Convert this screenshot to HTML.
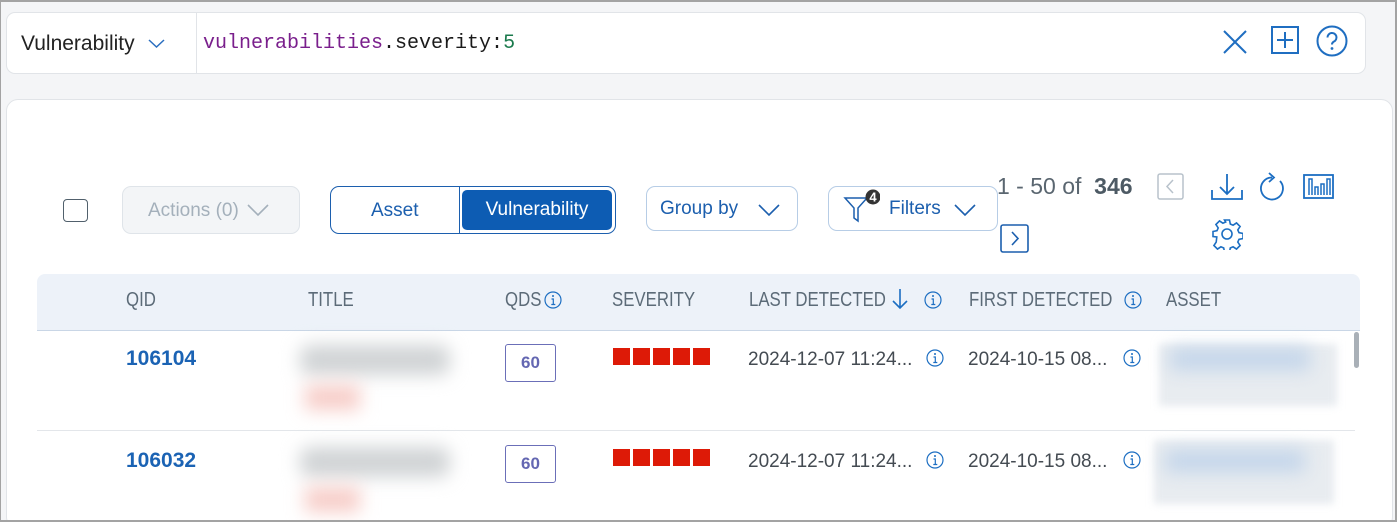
<!DOCTYPE html>
<html><head><meta charset="utf-8"><style>
*{box-sizing:border-box;margin:0;padding:0}
html,body{width:1397px;height:522px;overflow:hidden}
body{background:#f4f5f7;position:relative;font-family:"Liberation Sans",sans-serif}
.a{position:absolute}
.frame{left:0;top:0;width:1397px;height:522px;border:2px solid #a3a3a3;border-left-width:1px;z-index:50;pointer-events:none}
.search{left:6px;top:12px;width:1360px;height:62px;background:#fff;border:1px solid #e1e4e8;border-radius:9px}
.panel{left:6px;top:99px;width:1387px;height:430px;background:#fff;border:1px solid #e1e4e8;border-radius:12px}
.hdr{left:37px;top:274px;width:1323px;height:57px;background:#edf2f9;border-bottom:1px solid #c9d6e6;border-radius:8px 8px 0 0}
.hcell{top:289px;font-size:20px;color:#5c6b78;transform:scaleX(.84);transform-origin:0 0;white-space:nowrap}
.btn{border:1px solid #b7cde6;border-radius:9px;background:#fff;color:#1c5fae;font-size:19px}
.qid{font-size:21px;font-weight:bold;color:#1b63b4}
.qds{width:51px;height:38px;border:1px solid #6b6fb8;border-radius:3px;color:#6467b2;font-weight:bold;font-size:17px;text-align:center;line-height:36px}
.sev{width:97px;height:17px;background:repeating-linear-gradient(90deg,#dd1a07 0 17px,#fff 17px 20px)}
.dt{font-size:19px;color:#444b52;white-space:nowrap}
.blur{filter:blur(9px)}
</style></head><body>
<div class="a frame"></div>
<div class="a search"></div>
<div class="a" style="left:196px;top:13px;width:1px;height:60px;background:#e1e4e8"></div>
<div class="a" style="left:21px;top:32px;font-size:21px;color:#222">Vulnerability</div>
<svg class="a" style="left:148px;top:38px" width="17" height="11"><path d="M1 2l7.5 7L16 2" fill="none" stroke="#2a6ec0" stroke-width="1.5"/></svg>
<div class="a" style="left:203px;top:32px;font-family:'Liberation Mono',monospace;font-size:20px;color:#1a1a1a"><span style="color:#7a1f8c">vulnerabilities</span>.severity:<span style="color:#1a7a4c">5</span></div>
<svg class="a" style="left:1222px;top:29px" width="26" height="26"><path d="M2 2l22 22M24 2L2 24" stroke="#1f6ec1" stroke-width="2" fill="none"/></svg>
<svg class="a" style="left:1271px;top:26px" width="28" height="28"><rect x="1" y="1" width="26" height="26" fill="none" stroke="#1f6ec1" stroke-width="2"/><path d="M14 6v16M6 14h16" stroke="#1f6ec1" stroke-width="2"/></svg>
<svg class="a" style="left:1316px;top:25px" width="32" height="32"><circle cx="16" cy="16" r="14.5" fill="none" stroke="#1f6ec1" stroke-width="2"/><path d="M11.5 12.5a4.5 4.5 0 1 1 6.5 4c-1.5.8-2 1.6-2 3" fill="none" stroke="#1f6ec1" stroke-width="2"/><circle cx="16" cy="23.5" r="1.4" fill="#1f6ec1"/></svg>

<div class="a panel"></div>
<div class="a" style="left:63px;top:199px;width:25px;height:23px;border:1.5px solid #51606c;border-radius:4px;background:#fff"></div>
<div class="a" style="left:122px;top:186px;width:178px;height:48px;border:1px solid #dfe4e9;border-radius:9px;background:#f3f5f7;color:#a4b0bb;font-size:19px;padding:13px 0 0 25px">Actions (0)</div>
<svg class="a" style="left:247px;top:203px" width="22" height="14"><path d="M1 2l10 10L21 2" fill="none" stroke="#a4b0bb" stroke-width="1.6"/></svg>
<div class="a" style="left:330px;top:186px;width:286px;height:48px;border:1px solid #1c5fae;border-radius:9px;background:#fff"></div>
<div class="a" style="left:459px;top:187px;width:1px;height:46px;background:#1c5fae"></div>
<div class="a" style="left:371px;top:200px;font-size:19px;color:#1c5fae">Asset</div>
<div class="a" style="left:462px;top:190px;width:150px;height:40px;background:#0d5cb3;border-radius:5px;color:#fff;font-size:19px;text-align:center;line-height:40px">Vulnerability</div>
<div class="a btn" style="left:646px;top:186px;width:152px;height:45px;padding:11px 0 0 13px">Group by</div>
<svg class="a" style="left:758px;top:203px" width="22" height="14"><path d="M1 2l10 10L21 2" fill="none" stroke="#1c5fae" stroke-width="1.6"/></svg>
<div class="a btn" style="left:828px;top:186px;width:170px;height:45px;padding:11px 0 0 60px">Filters</div>
<svg class="a" style="left:954px;top:203px" width="22" height="14"><path d="M1 2l10 10L21 2" fill="none" stroke="#1c5fae" stroke-width="1.6"/></svg>
<svg class="a" style="left:840px;top:186px" width="40" height="40"><path d="M5 12h22l-9 10v13l-4-3v-10z" fill="none" stroke="#1c5fae" stroke-width="1.5"/><circle cx="33" cy="11" r="7.5" fill="#333"/><text x="33" y="15.5" font-size="13" font-weight="bold" fill="#fff" text-anchor="middle" font-family="Liberation Sans">4</text></svg>
<div class="a" style="left:997px;top:173px;font-size:23px;color:#5a6670;white-space:nowrap">1 - 50 of &nbsp;<b style="color:#4d5a64">346</b></div>
<svg class="a" style="left:1157px;top:173px" width="28" height="28"><rect x="1" y="1" width="25" height="25" rx="2" fill="none" stroke="#b8c2cb" stroke-width="1.5"/><path d="M16 7l-6 6.5 6 6.5" fill="none" stroke="#b8c2cb" stroke-width="1.5"/></svg>
<svg class="a" style="left:1000px;top:224px" width="30" height="30"><rect x="1" y="1" width="27" height="27" rx="2" fill="none" stroke="#1c5fae" stroke-width="1.6"/><path d="M12 8l6 6.5-6 6.5" fill="none" stroke="#1c5fae" stroke-width="1.6"/></svg>
<svg class="a" style="left:1210px;top:172px" width="34" height="30"><path d="M17 2v20M10 15l7 7 7-7M2 18v9h30v-9" fill="none" stroke="#1c6ec2" stroke-width="1.8"/></svg>
<svg class="a" style="left:1258px;top:172px" width="30" height="32"><path d="M22 9a11 11 0 1 1-8-3.5" fill="none" stroke="#1c6ec2" stroke-width="1.8"/><path d="M11 1l5 4.5-5 4.5" fill="none" stroke="#1c6ec2" stroke-width="1.8"/></svg>
<svg class="a" style="left:1303px;top:174px" width="32" height="26"><rect x="1" y="1" width="29" height="23" fill="none" stroke="#1c6ec2" stroke-width="1.8"/><path d="M6 21V5h3v16M12 21v-8h3v8M18 21v-11h3v11M24 21V5h3v16" fill="none" stroke="#1c6ec2" stroke-width="1.5"/></svg>
<svg class="a" style="left:1211px;top:218px" width="32" height="32" viewBox="0 0 32 32"><path d="M13.5 2h5l.8 4 2.8 1.2 3.4-2.3 3.6 3.6-2.3 3.4 1.2 2.8 4 .8v5l-4 .8-1.2 2.8 2.3 3.4-3.6 3.6-3.4-2.3-2.8 1.2-.8 4h-5l-.8-4-2.8-1.2-3.4 2.3-3.6-3.6 2.3-3.4L5.8 19 2 18.5v-5l4-.8 1.2-2.8-2.3-3.4 3.6-3.6 3.4 2.3 2.8-1.2z" fill="none" stroke="#1c6ec2" stroke-width="1.6"/><circle cx="16" cy="16" r="5" fill="none" stroke="#1c6ec2" stroke-width="1.6"/></svg>

<div class="a hdr"></div>
<div class="a hcell" style="left:126px">QID</div>
<div class="a hcell" style="left:308px">TITLE</div>
<div class="a hcell" style="left:505px">QDS</div>
<div class="a hcell" style="left:612px">SEVERITY</div>
<div class="a hcell" style="left:749px">LAST DETECTED</div>
<div class="a hcell" style="left:969px">FIRST DETECTED</div>
<div class="a hcell" style="left:1166px">ASSET</div>
<svg class="a" style="left:890px;top:287px" width="20" height="24"><path d="M10 2v19M3 14l7 7 7-7" fill="none" stroke="#1c6ec2" stroke-width="1.6"/></svg>
<svg width="0" height="0" style="position:absolute"><defs><g id="i"><circle cx="9" cy="9" r="8" fill="none" stroke="#1c6ec2" stroke-width="1.2"/><circle cx="9" cy="5" r="1" fill="#1c6ec2"/><path d="M7.5 8h1.8v5.5M7.3 13.5h4" fill="none" stroke="#1c6ec2" stroke-width="1.2"/></g></defs></svg>
<svg class="a" style="left:544px;top:291px" width="18" height="18"><use href="#i"/></svg>
<svg class="a" style="left:924px;top:291px" width="18" height="18"><use href="#i"/></svg>
<svg class="a" style="left:1124px;top:291px" width="18" height="18"><use href="#i"/></svg>

<div class="a" style="left:37px;top:430px;width:1318px;height:1px;background:#e3e6ea"></div>
<div class="a" style="left:1354px;top:332px;width:5px;height:36px;background:#a9b0b7;border-radius:3px"></div>

<div class="a qid" style="left:126px;top:347px">106104</div>
<div class="a qid" style="left:126px;top:449px">106032</div>
<div class="a blur" style="left:300px;top:345px;width:150px;height:30px;background:#d0d3d5;border-radius:10px"></div>
<div class="a blur" style="left:305px;top:385px;width:55px;height:25px;background:#f7cdc8"></div>
<div class="a blur" style="left:300px;top:447px;width:150px;height:30px;background:#d0d3d5;border-radius:10px"></div>
<div class="a blur" style="left:305px;top:487px;width:55px;height:25px;background:#f7cdc8"></div>
<div class="a qds" style="left:505px;top:344px">60</div>
<div class="a qds" style="left:505px;top:445px">60</div>
<div class="a sev" style="left:613px;top:348px"></div>
<div class="a sev" style="left:613px;top:449px"></div>
<div class="a dt" style="left:748px;top:349px">2024-12-07 11:24...</div>
<div class="a dt" style="left:748px;top:451px">2024-12-07 11:24...</div>
<div class="a dt" style="left:968px;top:349px">2024-10-15 08...</div>
<div class="a dt" style="left:968px;top:451px">2024-10-15 08...</div>
<svg class="a" style="left:926px;top:349px" width="18" height="18"><use href="#i"/></svg>
<svg class="a" style="left:926px;top:451px" width="18" height="18"><use href="#i"/></svg>
<svg class="a" style="left:1123px;top:349px" width="18" height="18"><use href="#i"/></svg>
<svg class="a" style="left:1123px;top:451px" width="18" height="18"><use href="#i"/></svg>
<div class="a" style="left:1159px;top:344px;width:178px;height:62px;background:#e8ecf0;filter:blur(4px)"></div>
<div class="a blur" style="left:1170px;top:348px;width:140px;height:22px;background:#c3d5ea"></div>
<div class="a" style="left:1154px;top:440px;width:180px;height:64px;background:#e8ecf0;filter:blur(4px)"></div>
<div class="a blur" style="left:1165px;top:450px;width:140px;height:22px;background:#c3d5ea"></div>
</body></html>
